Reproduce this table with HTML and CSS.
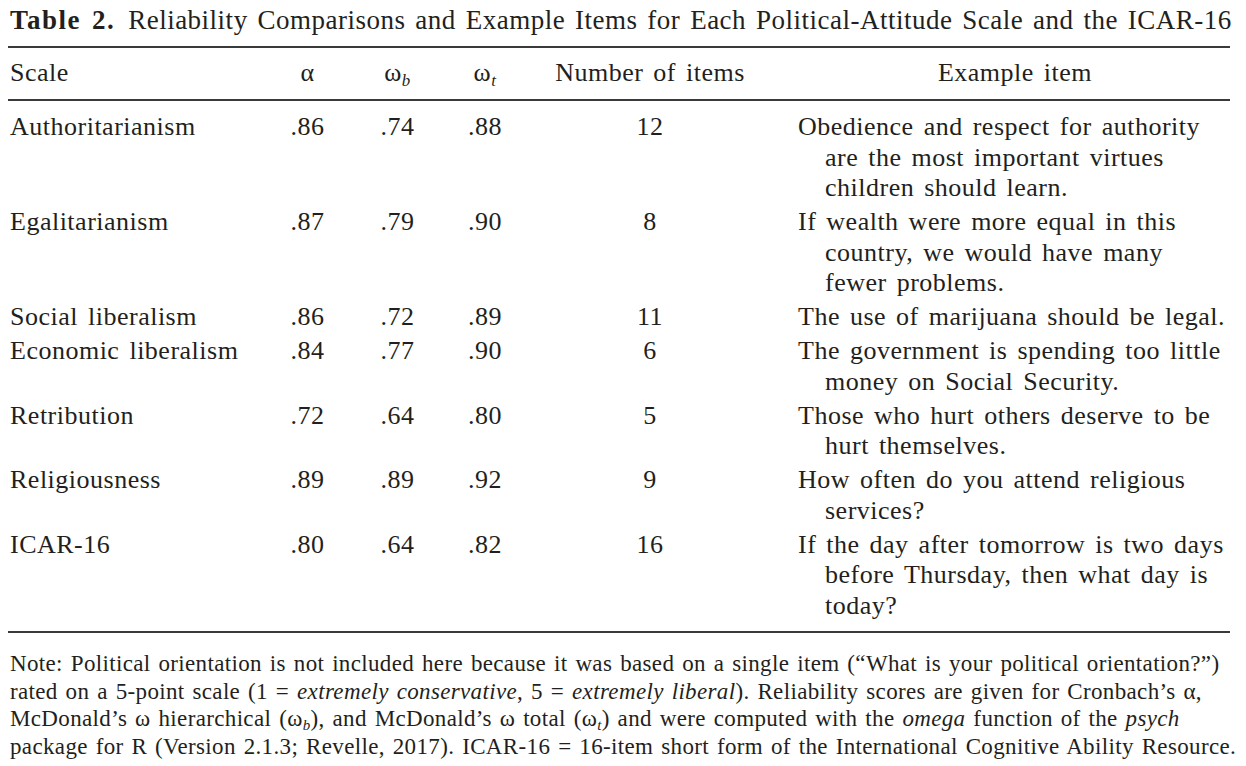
FILE: index.html
```html
<!DOCTYPE html>
<html>
<head>
<meta charset="utf-8">
<link rel="stylesheet" href="styles.css">
</head>
<body>
<div class="page">
  <div class="title"><span class="label">Table 2.</span><span class="title-text">Reliability Comparisons and Example Items for Each Political-Attitude Scale and the ICAR-16</span></div>
  <table class="tbl">
    <colgroup>
      <col class="c-scale">
      <col class="c-a">
      <col class="c-wb">
      <col class="c-wt">
      <col class="c-n">
      <col class="c-ex">
    </colgroup>
    <thead>
      <tr>
        <th class="scale">Scale</th>
        <th class="num">α</th>
        <th class="num">ω<sub>b</sub></th>
        <th class="num">ω<sub>t</sub></th>
        <th class="num">Number of items</th>
        <th class="ex-h">Example item</th>
      </tr>
    </thead>
    <tbody>
      <tr class="first">
        <td class="scale">Authoritarianism</td><td class="num">.86</td><td class="num">.74</td><td class="num">.88</td><td class="num">12</td>
        <td class="ex">Obedience and respect for authority<br>are the most important virtues<br>children should learn.</td>
      </tr>
      <tr>
        <td class="scale">Egalitarianism</td><td class="num">.87</td><td class="num">.79</td><td class="num">.90</td><td class="num">8</td>
        <td class="ex">If wealth were more equal in this<br>country, we would have many<br>fewer problems.</td>
      </tr>
      <tr>
        <td class="scale">Social liberalism</td><td class="num">.86</td><td class="num">.72</td><td class="num">.89</td><td class="num">11</td>
        <td class="ex">The use of marijuana should be legal.</td>
      </tr>
      <tr>
        <td class="scale">Economic liberalism</td><td class="num">.84</td><td class="num">.77</td><td class="num">.90</td><td class="num">6</td>
        <td class="ex">The government is spending too little<br>money on Social Security.</td>
      </tr>
      <tr>
        <td class="scale">Retribution</td><td class="num">.72</td><td class="num">.64</td><td class="num">.80</td><td class="num">5</td>
        <td class="ex">Those who hurt others deserve to be<br>hurt themselves.</td>
      </tr>
      <tr>
        <td class="scale">Religiousness</td><td class="num">.89</td><td class="num">.89</td><td class="num">.92</td><td class="num">9</td>
        <td class="ex">How often do you attend religious<br>services?</td>
      </tr>
      <tr class="last">
        <td class="scale">ICAR-16</td><td class="num">.80</td><td class="num">.64</td><td class="num">.82</td><td class="num">16</td>
        <td class="ex">If the day after tomorrow is two days<br>before Thursday, then what day is<br>today?</td>
      </tr>
    </tbody>
  </table>
  <p class="note">Note: Political orientation is not included here because it was based on a single item (“What is your political orientation?”)<br>rated on a 5-point scale (1 = <em>extremely conservative</em>, 5 = <em>extremely liberal</em>). Reliability scores are given for Cronbach’s α,<br>McDonald’s ω hierarchical (ω<sub>b</sub>), and McDonald’s ω total (ω<sub>t</sub>) and were computed with the <em>omega</em> function of the <em>psych</em><br>package for R (Version 2.1.3; Revelle, 2017). ICAR-16 = 16-item short form of the International Cognitive Ability Resource.</p>
</div>
</body>
</html>
```

FILE: styles.css
```css
html, body {
  margin: 0;
  padding: 0;
  background: #ffffff;
}
body {
  font-family: "Liberation Serif", "Times New Roman", serif;
  color: #231f20;
}
.page {
  width: 1222px;
  padding-left: 8px;
}
.title {
  font-size: 27px;
  line-height: 30px;
  padding-top: 5px;
  padding-left: 2px;
  margin-bottom: 11px;
  white-space: nowrap;
  letter-spacing: 0.5px;
  word-spacing: 2.6px;
}
.title .label {
  font-weight: bold;
  letter-spacing: 1.5px;
  margin-right: 13px;
}
.tbl {
  width: 1222px;
  border-collapse: collapse;
  table-layout: fixed;
  font-size: 26px;
  line-height: 30.5px;
  letter-spacing: 0.5px;
  word-spacing: 3px;
}
.c-scale { width: 252px; }
.c-a { width: 95px; }
.c-wb { width: 85px; }
.c-wt { width: 90px; }
.c-n { width: 240px; }
.c-ex { width: 460px; }
thead tr {
  border-top: 2px solid #3a3a3a;
  border-bottom: 2px solid #3a3a3a;
}
th {
  font-weight: normal;
  height: 51px;
  padding: 0;
  vertical-align: middle;
}
th.scale { text-align: left; padding-left: 2px; }
th.ex-h { text-align: center; padding-left: 30px; }
td {
  padding: 0 0 3.5px 0;
  vertical-align: top;
}
tr.first td { padding-top: 11px; }
tr.last td { padding-bottom: 10px; }
tbody tr.last { border-bottom: 2px solid #3a3a3a; }
.scale { text-align: left; padding-left: 2px; white-space: nowrap; }
.num { text-align: center; }
td.ex {
  padding-left: 55px;
  text-indent: -27px;
  white-space: nowrap;
}
sub {
  font-style: italic;
  font-size: 0.65em;
  vertical-align: -0.3em;
  line-height: 0;
}
.note {
  margin: 0;
  padding: 17px 0 0 2px;
  font-size: 23px;
  line-height: 27.7px;
  letter-spacing: 0.35px;
  word-spacing: 1.8px;
  white-space: nowrap;
}
```
